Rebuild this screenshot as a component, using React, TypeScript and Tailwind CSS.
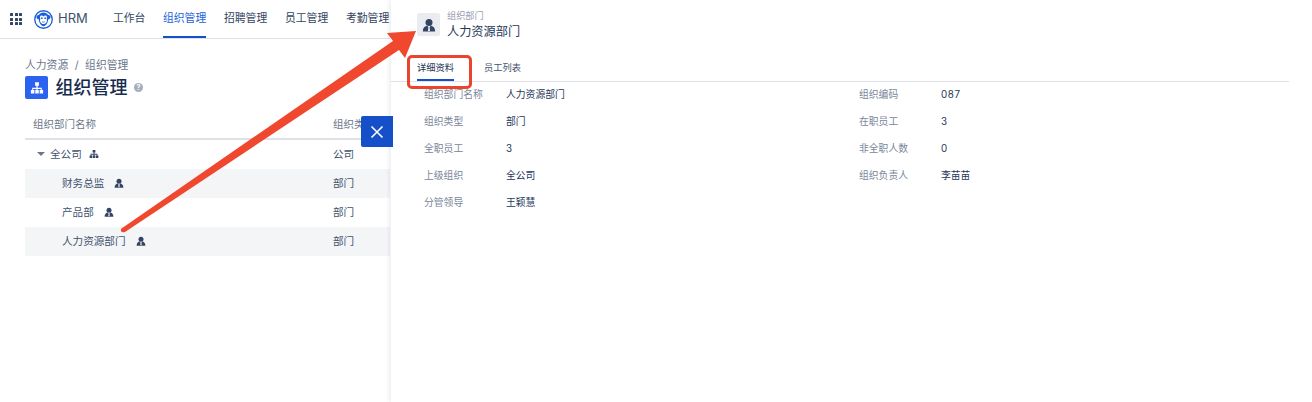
const font = { fontFamily: '"Inter","Noto Sans CJK SC",sans-serif' };

function Person({ size = 11, color = "#344563" }: { size?: number; color?: string }) {
  return (
    <svg width={size} height={size} viewBox="0 0 16 16" className="shrink-0">
      <circle cx="8" cy="5" r="4" fill={color} />
      <path d="M1 15.500c0-4.300 2.400-6.300 5-6.600L8 11l2-2.100c2.600.3 5 2.300 5 6.600z" fill={color} />
      <path d="M7.400 9.900h1.200l.4 4-1 1.100-1-1.100z" fill="#fff" />
    </svg>
  );
}

function Org({ size = 11, color = "#344563" }: { size?: number; color?: string }) {
  return (
    <svg width={size} height={size} viewBox="0 0 16 16" className="shrink-0">
      <path d="M5.800 1.500h4.400v4H8.700v2.200h4.800v2.600h1.500v4h-4v-4h1.300V9H8.700v1.300H10v4H6v-4h1.300V9H3.700v1.300H5v4H1v-4h1.500V7.700h4.800V5.500H5.800z" fill={color} />
    </svg>
  );
}

function Logo() {
  return (
    <svg width="19" height="19" viewBox="0 0 20 20" className="shrink-0">
      <circle cx="10" cy="10" r="9.200" fill="#fff" stroke="#1d5fd6" strokeWidth="1.400" />
      <path d="M10 2.600c-2.300 0-4 1-4.800 2.700-1.500-.3-2.700.8-2.600 2.300.1 1.300 1.100 2.200 2.400 2.200.3 3.400 2.300 7.200 5 7.200s4.700-3.800 5-7.200c1.300 0 2.300-.9 2.400-2.200.1-1.500-1.100-2.600-2.600-2.300C14 3.600 12.300 2.600 10 2.600z" fill="#1d5fd6" />
      <path d="M10 6.800c-.7-.9-1.700-1.300-2.600-.9-1 .4-1.300 1.600-.9 2.700.2.600.1 1.200-.1 1.800-.5 1.700 1.300 4.300 3.600 4.300s4.100-2.600 3.600-4.300c-.2-.6-.3-1.200-.1-1.800.4-1.100.1-2.300-.9-2.700-.9-.4-1.900 0-2.600.9z" fill="#fff" />
      <circle cx="8.300" cy="8.600" r=".9" fill="#1d5fd6" />
      <circle cx="11.700" cy="8.600" r=".9" fill="#1d5fd6" />
      <path d="M8.500 12.300c1 .7 2 .7 3 0" stroke="#1d5fd6" strokeWidth=".8" fill="none" />
    </svg>
  );
}

function NavItem({ label, active, w }: { label: string; active?: boolean; w: string }) {
  return (
    <div className={`h-full flex items-center relative shrink-0 ${w}`}>
      <span className={`text-[10.800px] whitespace-nowrap ${active ? "text-[#1d5fd6]" : "text-[#344563]"}`}>{label}</span>
      {active && <div className="absolute left-0 bottom-0 w-[43px] h-[2px] bg-[#1550c8]" />}
    </div>
  );
}

function Row({ name, type, icon, shaded, depth }: { name: string; type: string; icon: React.ReactNode; shaded?: boolean; depth?: boolean }) {
  return (
    <div className={`h-[29px] flex items-center text-[10.600px] text-[#42526e] ${shaded ? "bg-[#f4f5f7]" : ""}`}>
      <div className={`w-[308px] shrink-0 flex items-center ${depth ? "pl-[37px]" : "pl-[12px]"}`}>
        {!depth && <span className="w-0 h-0 border-l-[4px] border-r-[4px] border-t-[4.500px] border-l-transparent border-r-transparent border-t-[#6b778c] mr-[5px]" />}
        <span className={depth ? "mr-[10px]" : "mr-[7px]"}>{name}</span>
        {icon}
      </div>
      <div className="whitespace-nowrap">{type}</div>
    </div>
  );
}

function Field({ label, value, numeric }: { label: string; value: string; numeric?: boolean }) {
  return (
    <div className="h-[27px] flex items-center text-[9.800px]">
      <div className="w-[82px] shrink-0 text-[#7a869a]">{label}</div>
      <div className={numeric ? "text-[#253858] tracking-[0.6px]" : "text-[#253858]"}>{value}</div>
    </div>
  );
}

export default function App() {
  return (
    <div className="relative w-[1312px] h-[402px] overflow-hidden bg-white flex" style={font}>
      <div className="w-[390px] shrink-0 overflow-hidden flex flex-col">
        <div className="h-[39px] shrink-0 border-b border-[#dfe1e6] flex items-center w-[390px]">
          <div className="ml-[10px] w-[12px] grid grid-cols-3 gap-[1.500px] shrink-0">
            {Array.from({ length: 9 }).map((_, i) => (
              <span key={i} className="w-[3px] h-[3px] bg-[#344563] rounded-[0.5px]" />
            ))}
          </div>
          <div className="ml-[12px] shrink-0"><Logo /></div>
          <span className="ml-[5px] w-[55px] shrink-0 text-[13px] text-[#42526e]">HRM</span>
          <NavItem label="工作台" w="w-[50px]" />
          <NavItem label="组织管理" active w="w-[61px]" />
          <NavItem label="招聘管理" w="w-[61px]" />
          <NavItem label="员工管理" w="w-[61px]" />
          <NavItem label="考勤管理" w="w-[44px]" />
        </div>
        <div className="pl-[25px] pt-[19px] text-[10.800px] text-[#6b778c] leading-[16px] flex items-center">
          <span>人力资源</span><span className="mx-[6.500px]">/</span><span>组织管理</span>
        </div>
        <div className="pl-[25px] mt-[2px] flex items-center h-[23px]">
          <div className="w-[23px] h-[23px] rounded-[2px] bg-[#2b63f0] flex items-center justify-center">
            <Org size={14} color="#fff" />
          </div>
          <span className="ml-[7.500px] text-[18px] text-[#172b4d] font-medium leading-none">组织管理</span>
          <span className="ml-[6.500px] w-[9px] h-[9px] rounded-full bg-[#a5adba] text-white text-[7px] leading-[9px] text-center font-bold">?</span>
        </div>
        <div className="ml-[25px] mt-[12px] w-[365px]">
          <div className="h-[29px] flex items-center text-[10.500px] text-[#6b778c] border-b-2 border-[#dfe1e6]">
            <div className="w-[308px] shrink-0 pl-[8px]">组织部门名称</div>
            <div className="whitespace-nowrap">组织类型</div>
          </div>
          <Row name="全公司" type="公司" icon={<Org size={10} />} />
          <Row name="财务总监" type="部门" icon={<Person size={10} />} shaded depth />
          <Row name="产品部" type="部门" icon={<Person size={10} />} depth />
          <Row name="人力资源部门" type="部门" icon={<Person size={10} />} shaded depth />
        </div>
      </div>

      <div className="flex-1 min-w-0 pl-[26px] pr-[23px] shadow-[-2px_0_4px_rgba(9,30,66,0.08)] ml-px relative">
        <div className="h-[55px] flex items-start pt-[10px]">
          <div className="w-[23px] h-[23px] mt-[3px] rounded-[2px] bg-[#ebecf0] flex items-center justify-center">
            <Person size={14} />
          </div>
          <div className="ml-[7px]">
            <div className="text-[9.200px] text-[#97a0af] leading-[12px]">组织部门</div>
            <div className="text-[12.200px] text-[#253858] leading-[18px] mt-px">人力资源部门</div>
          </div>
        </div>
        <div className="-ml-[26px] pl-[26px] h-[27px] border-b border-[#dfe1e6] flex items-stretch text-[9.250px]">
          <div className="relative w-[37px] flex items-center text-[#253858]">
            详细资料
            <div className="absolute left-0 bottom-0 w-[37px] h-[2px] bg-[#1550c8]" />
          </div>
          <div className="ml-[30px] flex items-center text-[#42526e]">员工列表</div>
        </div>
        <div className="grid grid-cols-[435px_1fr] pl-[7px]">
          <Field label="组织部门名称" value="人力资源部门" />
          <Field label="组织编码" value="087" numeric />
          <Field label="组织类型" value="部门" />
          <Field label="在职员工" value="3" numeric />
          <Field label="全职员工" value="3" numeric />
          <Field label="非全职人数" value="0" numeric />
          <Field label="上级组织" value="全公司" />
          <Field label="组织负责人" value="李苗苗" />
          <Field label="分管领导" value="王颖慧" />
        </div>
      </div>

      <div className="absolute left-[361px] top-[116px] w-[32px] h-[31px] bg-[#1550c8] rounded-l-[2px] flex items-center justify-center">
        <svg width="14" height="14" viewBox="0 0 14 14"><path d="M1.500 1.500l11 11M12.500 1.500l-11 11" stroke="#fff" strokeWidth="1.600" /></svg>
      </div>
      <div className="absolute left-[407px] top-[55px] w-[65px] h-[34px] rounded-[5px] border-[3px] border-[#e8442e]" />
      <svg className="absolute left-0 top-0 pointer-events-none" width="1312" height="402" viewBox="0 0 1312 402">
        <path d="M121.500 228.500 L393 41 L387 33 L416 31 L405 58 L399 50 L125 232 Q122 233 121 231 Q120.500 229.500 121.500 228.500 Z" fill="#f0482f" />
      </svg>
    </div>
  );
}
